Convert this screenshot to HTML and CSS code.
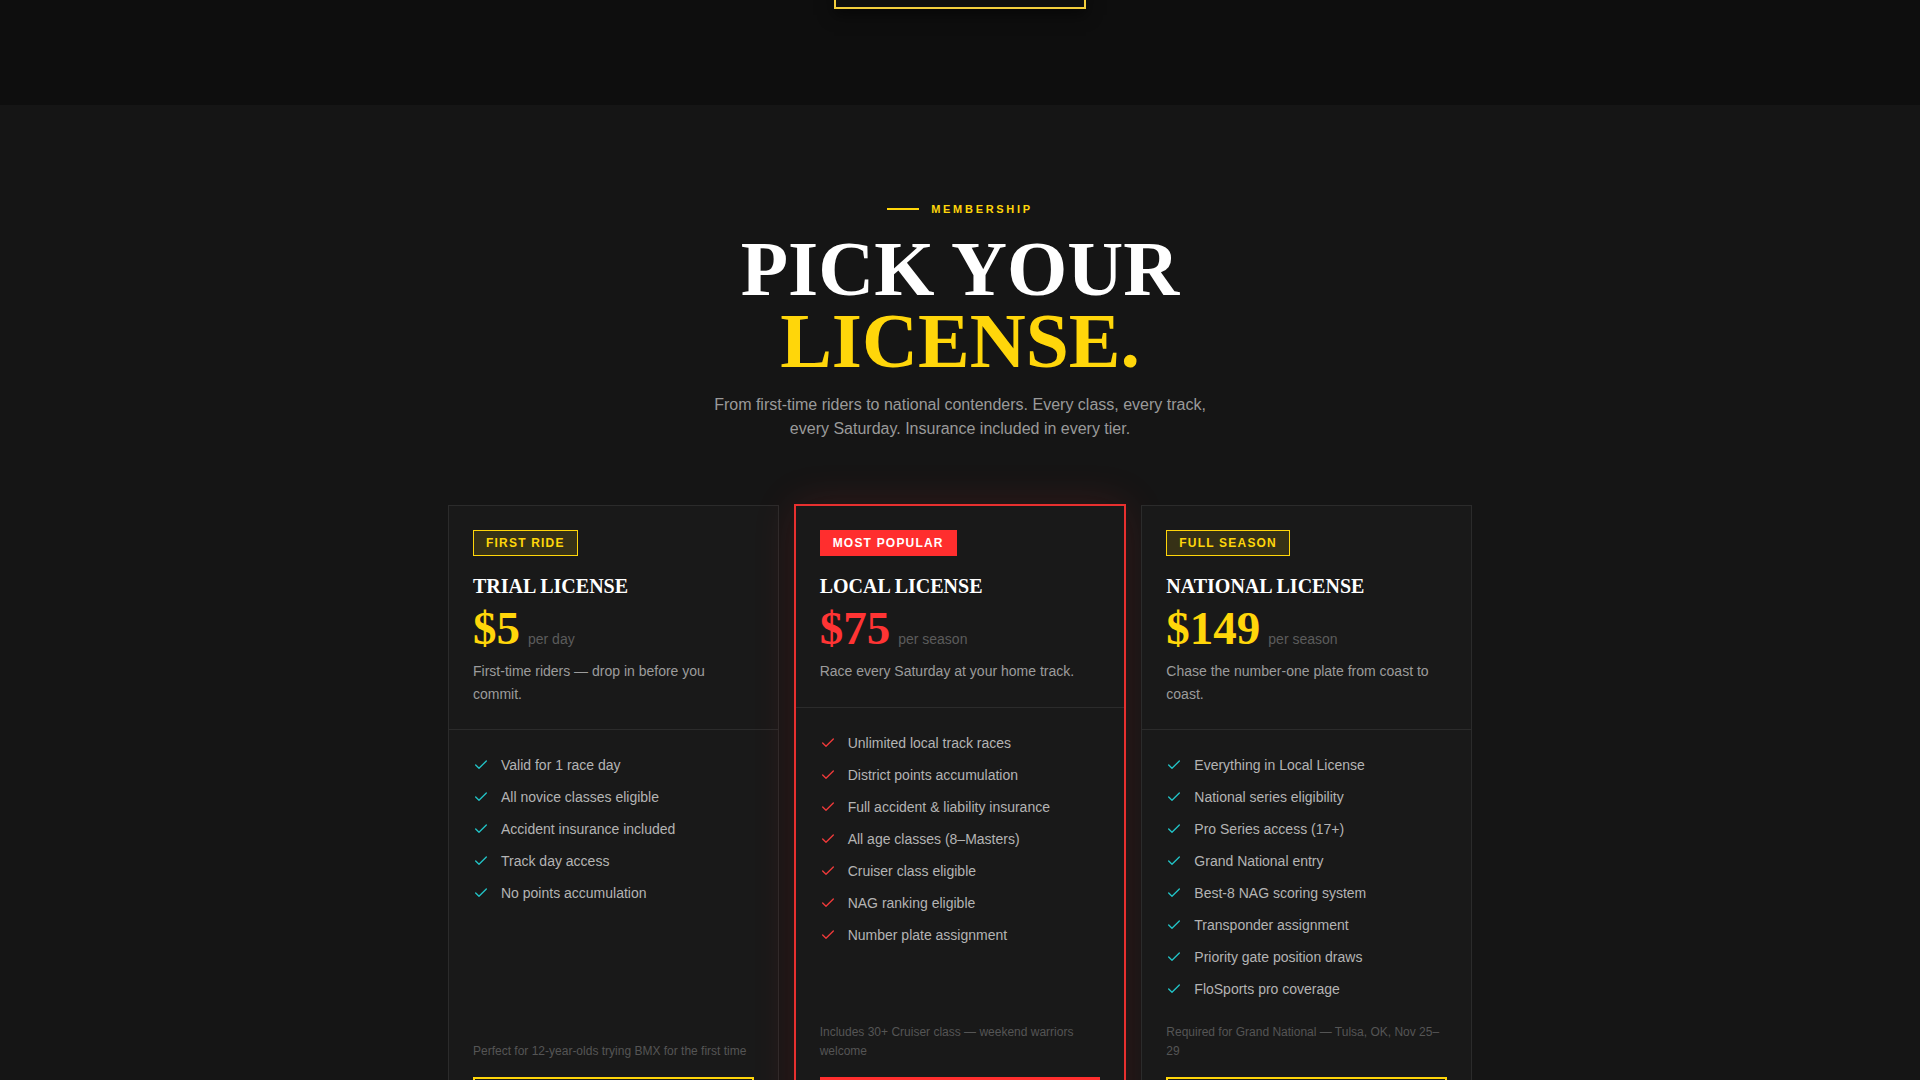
FILE: index.html
```html
<!DOCTYPE html>
<html>
<head>
    <meta charset="UTF-8">
    <link rel="stylesheet" href="styles.css">
</head>
<body>
    <header class="hero">
        <a class="hero-cta" href="#licenses" aria-label="Get licensed"></a>
    </header>

    <section class="pricing" id="licenses">
        <div class="eyebrow"><span class="eyebrow-line"></span>MEMBERSHIP</div>
        <h2 class="heading">PICK YOUR<br><span class="accent">LICENSE.</span></h2>
        <p class="lead">From first-time riders to national contenders. Every class, every track, every Saturday. Insurance included in every tier.</p>

        <div class="plans">
            <!-- trial -->
            <div class="card">
                <div class="card-head">
                    <span class="badge">FIRST RIDE</span>
                    <h3 class="plan-name">TRIAL LICENSE</h3>
                    <div class="price"><span class="amount">$5</span><span class="period">per day</span></div>
                    <p class="plan-desc">First-time riders — drop in before you commit.</p>
                </div>
                <ul class="features">
                    <li><svg viewBox="0 0 24 24"><path d="M20 6 9 17l-5-5"/></svg>Valid for 1 race day</li>
                    <li><svg viewBox="0 0 24 24"><path d="M20 6 9 17l-5-5"/></svg>All novice classes eligible</li>
                    <li><svg viewBox="0 0 24 24"><path d="M20 6 9 17l-5-5"/></svg>Accident insurance included</li>
                    <li><svg viewBox="0 0 24 24"><path d="M20 6 9 17l-5-5"/></svg>Track day access</li>
                    <li><svg viewBox="0 0 24 24"><path d="M20 6 9 17l-5-5"/></svg>No points accumulation</li>
                </ul>
                <div class="card-foot">
                    <p class="note">Perfect for 12-year-olds trying BMX for the first time</p>
                    <a class="btn" href="#">Start Riding</a>
                </div>
            </div>

            <!-- local -->
            <div class="card popular">
                <div class="card-head">
                    <span class="badge">MOST POPULAR</span>
                    <h3 class="plan-name">LOCAL LICENSE</h3>
                    <div class="price"><span class="amount">$75</span><span class="period">per season</span></div>
                    <p class="plan-desc">Race every Saturday at your home track.</p>
                </div>
                <ul class="features">
                    <li><svg viewBox="0 0 24 24"><path d="M20 6 9 17l-5-5"/></svg>Unlimited local track races</li>
                    <li><svg viewBox="0 0 24 24"><path d="M20 6 9 17l-5-5"/></svg>District points accumulation</li>
                    <li><svg viewBox="0 0 24 24"><path d="M20 6 9 17l-5-5"/></svg>Full accident &amp; liability insurance</li>
                    <li><svg viewBox="0 0 24 24"><path d="M20 6 9 17l-5-5"/></svg>All age classes (8–Masters)</li>
                    <li><svg viewBox="0 0 24 24"><path d="M20 6 9 17l-5-5"/></svg>Cruiser class eligible</li>
                    <li><svg viewBox="0 0 24 24"><path d="M20 6 9 17l-5-5"/></svg>NAG ranking eligible</li>
                    <li><svg viewBox="0 0 24 24"><path d="M20 6 9 17l-5-5"/></svg>Number plate assignment</li>
                </ul>
                <div class="card-foot">
                    <p class="note">Includes 30+ Cruiser class — weekend warriors welcome</p>
                    <a class="btn" href="#">Get Local License</a>
                </div>
            </div>

            <!-- national -->
            <div class="card">
                <div class="card-head">
                    <span class="badge">FULL SEASON</span>
                    <h3 class="plan-name">NATIONAL LICENSE</h3>
                    <div class="price"><span class="amount">$149</span><span class="period">per season</span></div>
                    <p class="plan-desc">Chase the number-one plate from coast to coast.</p>
                </div>
                <ul class="features">
                    <li><svg viewBox="0 0 24 24"><path d="M20 6 9 17l-5-5"/></svg>Everything in Local License</li>
                    <li><svg viewBox="0 0 24 24"><path d="M20 6 9 17l-5-5"/></svg>National series eligibility</li>
                    <li><svg viewBox="0 0 24 24"><path d="M20 6 9 17l-5-5"/></svg>Pro Series access (17+)</li>
                    <li><svg viewBox="0 0 24 24"><path d="M20 6 9 17l-5-5"/></svg>Grand National entry</li>
                    <li><svg viewBox="0 0 24 24"><path d="M20 6 9 17l-5-5"/></svg>Best-8 NAG scoring system</li>
                    <li><svg viewBox="0 0 24 24"><path d="M20 6 9 17l-5-5"/></svg>Transponder assignment</li>
                    <li><svg viewBox="0 0 24 24"><path d="M20 6 9 17l-5-5"/></svg>Priority gate position draws</li>
                    <li><svg viewBox="0 0 24 24"><path d="M20 6 9 17l-5-5"/></svg>FloSports pro coverage</li>
                </ul>
                <div class="card-foot">
                    <p class="note">Required for Grand National — Tulsa, OK, Nov 25–29</p>
                    <a class="btn" href="#">Go National</a>
                </div>
            </div>
        </div>
    </section>
</body>
</html>
```

FILE: styles.css
```css
body {
    margin: 0;
    background: #151515;
    color: #fff;
    font-family: "Liberation Sans", Arial, sans-serif;
}
.hero {
    height: 105px;
    overflow: hidden;
    background: #0e0e0e;
    display: flex;
    justify-content: center;
    align-items: flex-start;
}
.hero-cta {
    display: block;
    width: 248px;
    height: 50px;
    margin-top: -45px;
    border: 2px solid #f2cd3c;
    box-shadow: 0 6px 14px rgba(0, 0, 0, 0.5);
}
.pricing {
    padding: 96px 0 80px;
    background: #151515;
}
.eyebrow {
    display: flex;
    justify-content: center;
    align-items: center;
    gap: 12px;
    font-size: 11px;
    line-height: 16.5px;
    font-weight: bold;
    letter-spacing: 2.7px;
    color: #ffd60a;
    margin-bottom: 15px;
}
.eyebrow-line {
    width: 32px;
    height: 2px;
    background: #ffd60a;
}
.heading {
    margin: 0;
    text-align: center;
    font-family: "Liberation Serif", "Times New Roman", serif;
    font-weight: bold;
    font-size: 77.5px;
    line-height: 0.94;
    color: #fff;
}
.accent {
    color: #ffd60a;
}
.lead {
    max-width: 510px;
    margin: 15px auto 64px;
    text-align: center;
    font-size: 16px;
    line-height: 24px;
    color: #9a9a9a;
}
.plans {
    max-width: 1024px;
    margin: 0 auto;
    display: grid;
    grid-template-columns: repeat(3, 1fr);
    gap: 16px;
}
.card {
    display: flex;
    flex-direction: column;
    background: #191919;
    border: 1px solid #2b2b2b;
}
/* the featured plan gets a doubled red edge and a soft glow */
.card.popular {
    border-color: #e8302f;
    box-shadow: 0 0 0 1px #e8302f, 0 0 40px rgba(232, 48, 47, 0.16);
}
.card-head {
    padding: 24px;
    border-bottom: 1px solid #2b2b2b;
}
.badge {
    display: inline-block;
    padding: 5px 12px;
    font-size: 12px;
    line-height: 14px;
    font-weight: bold;
    letter-spacing: 1.2px;
    color: #ffd60a;
    background: rgba(255, 214, 10, 0.13);
    border: 1px solid #ffd60a;
}
.popular .badge {
    color: #fff;
    background: #ff2e2e;
    border-color: #ff2e2e;
}
.plan-name {
    margin: 18px 0 0;
    font-family: "Liberation Serif", "Times New Roman", serif;
    font-size: 20px;
    line-height: 24px;
    font-weight: bold;
    color: #fff;
}
.price {
    display: flex;
    align-items: baseline;
    margin-top: 7px;
}
.amount {
    font-family: "Liberation Serif", "Times New Roman", serif;
    font-size: 47px;
    line-height: 1;
    font-weight: bold;
    color: #ffd60a;
}
.popular .amount {
    color: #ff3434;
}
.period {
    margin-left: 8px;
    font-size: 14px;
    color: #5c5c5c;
}
.plan-desc {
    margin: 8px 0 0;
    font-size: 14px;
    line-height: 22.4px;
    color: #9c9c9c;
}
.features {
    list-style: none;
    margin: 0;
    padding: 24px 24px 0;
    display: flex;
    flex-direction: column;
    gap: 10px;
}
.features li {
    display: flex;
    align-items: flex-start;
    gap: 12px;
    font-size: 14px;
    line-height: 22px;
    color: #b4b4b4;
}
.features svg {
    flex: none;
    width: 16px;
    height: 16px;
    margin-top: 3px;
    fill: none;
    stroke: #22c3c6;
    stroke-width: 2;
    stroke-linecap: round;
    stroke-linejoin: round;
}
.popular .features svg {
    stroke: #ef3a3a;
}
.card-foot {
    margin-top: auto;
    padding: 23px 24px 24px;
}
.note {
    margin: 0 0 16px;
    font-size: 12px;
    line-height: 19.2px;
    color: #555;
}
.btn {
    display: block;
    padding: 14px;
    text-align: center;
    font-size: 13px;
    font-weight: bold;
    letter-spacing: 1.5px;
    text-transform: uppercase;
    text-decoration: none;
    color: #ffd60a;
    border: 2px solid #ffd60a;
}
.popular .btn {
    color: #fff;
    background: #ff2e2e;
    border-color: #ff2e2e;
}
```
